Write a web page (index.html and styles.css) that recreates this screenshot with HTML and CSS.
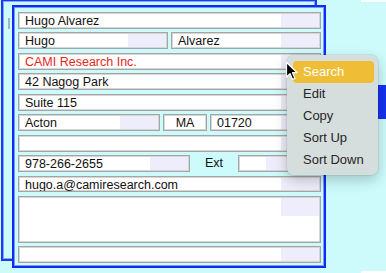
FILE: index.html
```html
<!DOCTYPE html>
<html lang="en">
<head>
    <meta charset="UTF-8">
    <title>Contact Card</title>
    <link rel="stylesheet" href="styles.css">
</head>
<body>

<div class="desk">
    <div class="back-window"><span class="tick"></span></div>
    <div class="edge-top"></div>
    <div class="edge-bottom"></div>
    <div class="side-tab"></div>

    <div class="card">
        <div class="field">Hugo Alvarez</div>
        <div class="row">
            <div class="field grow">Hugo</div>
            <div class="field grow">Alvarez</div>
        </div>
        <div class="field red">CAMI Research Inc.</div>
        <div class="field">42 Nagog Park</div>
        <div class="field">Suite 115</div>
        <div class="row">
            <div class="field city">Acton</div>
            <div class="field state">MA</div>
            <div class="field grow">01720</div>
        </div>
        <div class="field"></div>
        <div class="row">
            <div class="field phone">978-266-2655</div>
            <div class="ext-label">Ext</div>
            <div class="field ext"></div>
        </div>
        <div class="field">hugo.a@camiresearch.com</div>
        <div class="field notes"></div>
        <div class="field"></div>
    </div>

    <ul class="menu">
        <li class="selected">Search</li>
        <li>Edit</li>
        <li>Copy</li>
        <li>Sort Up</li>
        <li>Sort Down</li>
    </ul>

    <svg class="cursor" width="14" height="20" viewBox="0 0 14 20">
        <path d="M1.5 1.5 L1.5 16 L5 12.6 L7.6 18.4 L10 17.4 L7.5 11.7 L12.2 11.7 Z" fill="#000" stroke="#fff" stroke-width="1.2" stroke-linejoin="round"/>
    </svg>
</div>

</body>
</html>
```

FILE: styles.css
```css
body {
    margin: 0;
    background: #cdfbfb;
    font-family: "Liberation Sans", Arial, sans-serif;
}
.desk {
    position: relative;
    width: 386px;
    height: 273px;
    overflow: hidden;
}
.back-window {
    position: absolute;
    left: 1px;
    top: -1px;
    width: 316px;
    height: 262px;
    box-sizing: border-box;
    border: 2px solid #1a3af5;
    box-shadow: inset 0 0 0 1px #8aa4ff;
}
.tick {
    position: absolute;
    left: 5px;
    top: 17px;
    width: 2px;
    height: 11px;
    background: #a9b4b8;
}
.edge-top {
    position: absolute;
    right: 0;
    top: 0;
    width: 25px;
    height: 2px;
    background: #fff;
}
.edge-bottom {
    position: absolute;
    right: 0;
    bottom: 0;
    width: 25px;
    height: 2px;
    background: #fff;
}
.side-tab {
    position: absolute;
    left: 378px;
    top: 85px;
    width: 10px;
    height: 34px;
    background: #1532f0;
}
.card {
    position: absolute;
    left: 12px;
    top: 5px;
    width: 314px;
    height: 263px;
    box-sizing: border-box;
    border: 2px solid #0c2ef2;
    box-shadow: inset 0 0 0 1px #7d98ff;
    background: #cdfbfb;
    padding: 5px 3px 3px 4px;
    display: flex;
    flex-direction: column;
    gap: 3.5px;
}
.row {
    display: flex;
    gap: 3px;
}
.field {
    height: 17px;
    box-sizing: border-box;
    border: 1px solid #a5a5a5;
    box-shadow: inset 0 0 0 1px #d6d6d6;
    background: linear-gradient(#ededfb, #ededfb) no-repeat top right / 39px 100%, #fff;
    font-size: 12.5px;
    line-height: 16px;
    padding-left: 6px;
    color: #111;
    white-space: nowrap;
    overflow: hidden;
}
.grow {
    flex: 1;
}
.red {
    color: #e5261b;
}
.city {
    width: 142px;
}
.state {
    width: 44px;
    padding-left: 0;
    text-align: center;
    background: #fff;
}
.phone {
    width: 172px;
}
.ext-label {
    width: 42px;
    font-size: 12.5px;
    line-height: 17px;
    text-align: center;
    color: #111;
}
.ext {
    width: 68px;
}
.notes {
    height: 47px;
    background: linear-gradient(#ededfb, #ededfb) no-repeat top right / 39px 19px, #fff;
}
.menu {
    position: absolute;
    left: 287px;
    top: 55px;
    width: 91px;
    margin: 0;
    padding: 6px 4px 4px 6px;
    box-sizing: border-box;
    list-style: none;
    background: #d6dddd;
    border-radius: 7px;
    box-shadow: 0 0 0 1px rgba(0, 0, 0, 0.06), 0 5px 14px rgba(0, 0, 0, 0.22);
}
.menu li {
    height: 22px;
    line-height: 22px;
    padding-left: 10px;
    font-size: 13px;
    color: #262626;
    border-radius: 4px;
}
.menu li.selected {
    background: #f0bd36;
    color: #fff;
}
.cursor {
    position: absolute;
    left: 285px;
    top: 61px;
}
```
